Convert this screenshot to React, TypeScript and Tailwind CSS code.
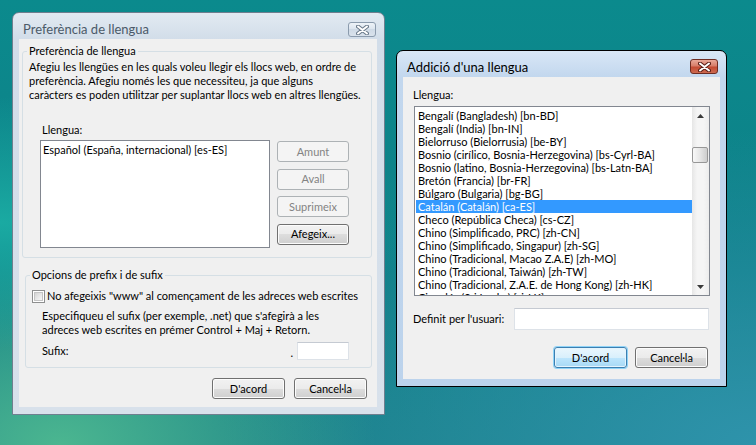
import { ReactNode } from 'react'

const langs = [
  'Bengalí (Bangladesh) [bn-BD]',
  'Bengalí (India) [bn-IN]',
  'Bielorruso (Bielorrusia) [be-BY]',
  'Bosnio (cirílico, Bosnia-Herzegovina) [bs-Cyrl-BA]',
  'Bosnio (latino, Bosnia-Herzegovina) [bs-Latn-BA]',
  'Bretón (Francia) [br-FR]',
  'Búlgaro (Bulgaria) [bg-BG]',
  'Catalán (Catalán) [ca-ES]',
  'Checo (República Checa) [cs-CZ]',
  'Chino (Simplificado, PRC) [zh-CN]',
  'Chino (Simplificado, Singapur) [zh-SG]',
  'Chino (Tradicional, Macao Z.A.E) [zh-MO]',
  'Chino (Tradicional, Taiwán) [zh-TW]',
  'Chino (Tradicional, Z.A.E. de Hong Kong) [zh-HK]',
  'Cingalés (Sri Lanka) [si-LK]',
]

function CloseX({ outline }: { outline: string }) {
  return (
    <svg width="13" height="10" viewBox="0 0 13 10">
      <path d="M2 1.5 L11 8.5 M11 1.5 L2 8.5" stroke={outline} strokeWidth="4" strokeLinecap="round" fill="none" />
      <path d="M2 1.5 L11 8.5 M11 1.5 L2 8.5" stroke="#ffffff" strokeWidth="2" strokeLinecap="round" fill="none" />
    </svg>
  )
}

function Btn({ children, kind = 'normal', w }: { children: ReactNode; kind?: 'normal' | 'disabled' | 'primary'; w: string }) {
  const base = 'flex h-[21px] items-center justify-center rounded-[3px] border text-[11px] leading-[14px] ' + w
  if (kind === 'disabled')
    return <div className={base + ' border-[#adb2b5] bg-[#f4f4f4] text-[#838383]'}>{children}</div>
  if (kind === 'primary')
    return (
      <div className={base + ' border-[#3c7fb1] bg-[linear-gradient(#eaf6fd_0%,#d9f0fc_50%,#bee6fd_50%,#a7d9f5_100%)] shadow-[0_0_0_1px_#8fd3f7,inset_0_0_0_1px_#e4f4fd] text-black'}>
        {children}
      </div>
    )
  return (
    <div className={base + ' border-[#707070] bg-[linear-gradient(#f2f2f2_0%,#ebebeb_50%,#dddddd_50%,#cfcfcf_100%)] shadow-[inset_0_0_0_1px_#fcfcfc] text-black'}>
      {children}
    </div>
  )
}

function Arrow({ up }: { up?: boolean }) {
  return (
    <div className="flex h-[17px] items-center justify-center">
      <svg width="7" height="4" viewBox="0 0 7 4">
        <path d={up ? 'M0 4 L3.5 0 L7 4 Z' : 'M0 0 L3.5 4 L7 0 Z'} fill="#3a3a3a" />
      </svg>
    </div>
  )
}

function PrefWindow() {
  return (
    <div className="absolute left-[12px] top-[12px] flex h-[403px] w-[373px] flex-col rounded-t-[7px] border border-[#6f7f8f] bg-[linear-gradient(#e2eaf2,#d2dde9_26px,#d8e1eb)]">
      <div className="flex h-[26px] shrink-0 items-start">
        <span className="pl-[10px] pt-[8px] text-[13px] leading-[16px] text-[#4b5a69]">Preferència de llengua</span>
        <div className="ml-auto mr-[8px] mt-[9px] flex h-[15px] w-[28px] items-center justify-center rounded-[3px] border border-[#8b9bad] bg-[linear-gradient(#eef3f8,#dbe4ee_50%,#cfdae6_50%,#d9e2ec)]">
          <CloseX outline="#6a7a8b" />
        </div>
      </div>
      <div className="ml-[6px] flex h-[368px] w-[358px] flex-col bg-[#f0f0f0]">
        <fieldset className="ml-[3px] mt-[4px] w-[350px] min-w-0 rounded-[3px] border border-[#d5dfe5] pb-[9px] pl-[6px]">
          <legend className="-ml-[2px] px-[2px] leading-[16px]">Preferència de llengua</legend>
          <div className="whitespace-nowrap pt-[1px] leading-[14px]">
            Afegiu les llengües en les quals voleu llegir els llocs web, en ordre de
            <br />
            preferència. Afegiu només les que necessiteu, ja que alguns
            <br />
            caràcters es poden utilitzar per suplantar llocs web en altres llengües.
          </div>
          <div className="ml-[13px] mt-[21px] leading-[14px]">Llengua:</div>
          <div className="ml-[11px] mt-[3px] flex gap-[7px]">
            <div className="h-[108px] w-[230px] border border-[#828790] bg-white pl-[2px] pt-[2px] leading-[13px]">
              Español (España, internacional) [es-ES]
            </div>
            <div className="flex flex-col gap-[6.5px] pt-[1px]">
              <Btn kind="disabled" w="w-[72px]">Amunt</Btn>
              <Btn kind="disabled" w="w-[72px]">Avall</Btn>
              <Btn kind="disabled" w="w-[72px]">Suprimeix</Btn>
              <Btn w="w-[72px]">Afegeix...</Btn>
            </div>
          </div>
        </fieldset>

        <fieldset className="ml-[6px] mt-[9px] w-[347px] min-w-0 rounded-[3px] border border-[#d5dfe5] pb-[7px] pl-[6px]">
          <legend className="-ml-[2px] px-[2px] leading-[16px]">Opcions de prefix i de sufix</legend>
          <div className="mt-[6px] flex items-center gap-[2px] leading-[14px]">
            <div className="h-[13px] w-[13px] border border-[#8e8f8f] bg-white p-[1px]">
              <div className="h-full w-full border border-[#c4c4c4] bg-[linear-gradient(135deg,#d4d4d4,#f8f8f8)]" />
            </div>
            <span className="whitespace-nowrap">No afegeixis "www" al començament de les adreces web escrites</span>
          </div>
          <div className="ml-[10px] mt-[6px] whitespace-nowrap leading-[14px]">
            Especifiqueu el sufix (per exemple, .net) que s'afegirà a les
            <br />
            adreces web escrites en prémer Control + Maj + Retorn.
          </div>
          <div className="ml-[10px] mt-[5px] flex h-[18px] w-[307px] items-center">
            <span className="leading-[14px]">Sufix:</span>
            <span className="ml-auto self-end leading-[14px]">.</span>
            <div className="ml-[4px] h-[18px] w-[52px] border border-[#dde2e8] border-t-[#c5cad2] bg-white" />
          </div>
        </fieldset>

        <div className="mt-[10px] flex justify-end gap-[9px] pr-[10px]">
          <Btn w="w-[73px]">D'acord</Btn>
          <Btn w="w-[73px]">Cancel·la</Btn>
        </div>
      </div>
    </div>
  )
}

function AddWindow() {
  return (
    <div className="absolute left-[396px] top-[50px] flex h-[337px] w-[331px] flex-col rounded-t-[7px] border border-black bg-[linear-gradient(#d9e7f6,#c2d7ee_26px,#bcd3ec)]">
      <div className="flex h-[26px] shrink-0 items-start">
        <span className="pl-[10px] pt-[8px] text-[13px] leading-[16px] text-black">Addició d'una llengua</span>
        <div className="ml-auto mr-[8px] mt-[8px] flex h-[15px] w-[28px] items-center justify-center rounded-[3px] border border-[#6e2c22] bg-[linear-gradient(#e9a898_0%,#d77e6a_45%,#c44b33_55%,#cc6a50_100%)]">
          <CloseX outline="#5a1e16" />
        </div>
      </div>
      <div className="ml-[6px] flex h-[302px] w-[317px] flex-col bg-[#f0f0f0] pl-[10px]">
        <div className="mt-[11px] leading-[14px]">Llengua:</div>
        <div className="ml-[1px] mt-[4px] flex h-[190px] w-[296px] border border-[#828790] bg-white">
          <div className="flex-1 overflow-hidden pl-[1px] pt-[2px]">
            {langs.map((l, i) => (
              <div
                key={l}
                className={
                  'h-[13px] whitespace-nowrap pl-[2px] leading-[13px] ' + (i === 7 ? 'bg-[#3399ff] text-white' : 'text-black')
                }
              >
                {l}
              </div>
            ))}
          </div>
          <div className="flex w-[17px] flex-col bg-[linear-gradient(90deg,#e6e6e6,#f5f5f5_30%,#f5f5f5_70%,#ececec)]">
            <Arrow up />
            <div className="flex-1">
              <div className="mt-[23px] h-[16px] w-[16px] rounded-[2px] border border-[#979797] bg-[linear-gradient(90deg,#f8f8f8,#e6e6e6_50%,#cdcdcd)]" />
            </div>
            <Arrow />
          </div>
        </div>
        <div className="mt-[12px] flex w-[296px] items-center">
          <span className="leading-[14px]">Definit per l'usuari:</span>
          <div className="ml-auto h-[22px] w-[195px] border border-[#dde2e8] border-t-[#c5cad2] bg-white" />
        </div>
        <div className="mt-[17px] flex w-[295px] justify-end gap-[8px]">
          <Btn kind="primary" w="w-[73px]">D'acord</Btn>
          <Btn w="w-[73px]">Cancel·la</Btn>
        </div>
      </div>
    </div>
  )
}

export default function App() {
  return (
    <div className="relative h-[445px] w-[756px] overflow-hidden bg-[radial-gradient(ellipse_at_0%_50%,#1aaaa2_0%,transparent_40%),radial-gradient(ellipse_at_8%_100%,#4bb690_0%,transparent_32%),radial-gradient(ellipse_at_100%_100%,#2e93ab_0%,transparent_50%),linear-gradient(180deg,#0b8a8d,#0e7f87_60%,#1a8088)] font-['Lato',sans-serif] text-[11px] text-black">
      <PrefWindow />
      <AddWindow />
    </div>
  )
}
